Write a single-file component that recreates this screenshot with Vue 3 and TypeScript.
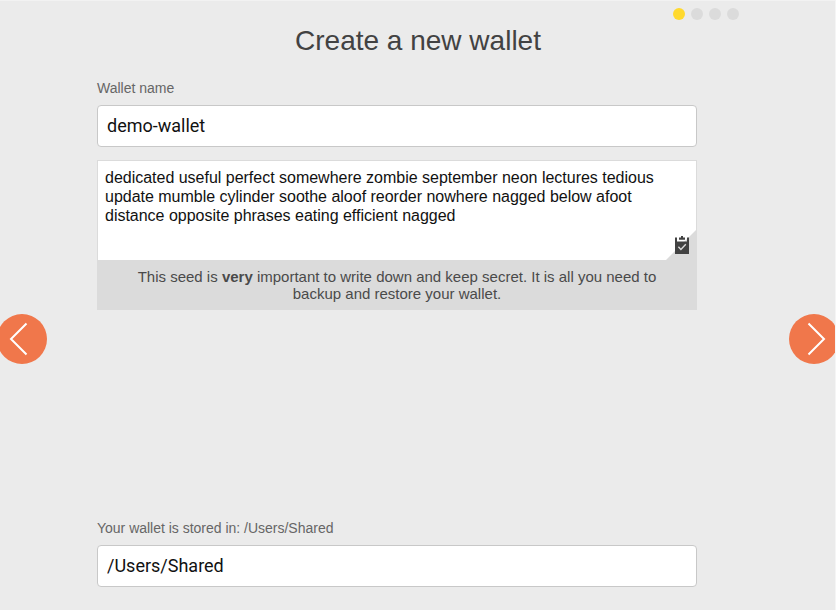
<script setup lang="ts">
import { ref } from 'vue'

const steps = 4
const currentStep = ref(1)
const walletName = ref('demo-wallet')
const walletPath = ref('/Users/Shared')
const seed =
  'dedicated useful perfect somewhere zombie september neon lectures tedious update mumble cylinder soothe aloof reorder nowhere nagged below afoot distance opposite phrases eating efficient nagged'
</script>

<template>
  <div class="wizard">
    <header class="header">
      <div class="dots">
        <span v-for="n in steps" :key="n" class="dot" :class="{ active: n === currentStep }"></span>
      </div>
      <h1 class="title">Create a new wallet</h1>
    </header>
    <div class="body">
      <button class="nav prev" type="button" aria-label="Previous">
        <svg width="50" height="50" viewBox="0 0 50 50">
          <path d="M29.5 9.5 L14 25 L29.5 40.5" />
        </svg>
      </button>
      <main class="form">
        <label class="label" for="name">Wallet name</label>
        <input id="name" v-model="walletName" class="input" type="text" spellcheck="false" />
        <section class="seed">
          <p class="words">{{ seed }}</p>
          <button class="copy" type="button" aria-label="Copy seed">
            <svg width="31" height="31" viewBox="0 0 31 31">
              <path class="corner" d="M31 0 V31 H0 Z" />
              <path class="clip" d="M9 8.5 H11 V12.4 H21 V8.5 H23 V25 H9 Z" />
              <path class="clip" d="M13 8.6 H15 V7 H17 V8.6 H19 V10.8 H13 Z" />
              <path class="check" d="M12.4 17.8 L14.9 20.4 L19.8 15.2" />
            </svg>
          </button>
        </section>
        <p class="note">
          This seed is <b>very</b> important to write down and keep secret. It is all you need to backup and restore your wallet.
        </p>
        <label class="label path-label" for="path">Your wallet is stored in: /Users/Shared</label>
        <input id="path" v-model="walletPath" class="input" type="text" spellcheck="false" />
      </main>
      <button class="nav next" type="button" aria-label="Next">
        <svg width="50" height="50" viewBox="0 0 50 50">
          <path d="M19.5 9.5 L35 25 L19.5 40.5" />
        </svg>
      </button>
    </div>
  </div>
</template>

<style>
body {
  background: #ebebeb;
}
</style>

<style scoped>
.wizard {
  box-sizing: border-box;
  width: 836px;
  height: 610px;
  overflow: hidden;
  display: flex;
  flex-direction: column;
  background: #ebebeb;
  border-top: 1px solid #f2f2f2;
  border-right: 1px solid #f5f5f5;
  font-family: "Liberation Sans", Arial, sans-serif;
}
.header {
  height: 76px;
}
.dots {
  display: flex;
  justify-content: flex-end;
  gap: 6px;
  padding: 7px 96px 0 0;
}
.dot {
  width: 12px;
  height: 12px;
  border-radius: 50%;
  background: #dbdbdb;
}
.dot.active {
  background: #ffd92e;
}
.title {
  margin: 4px 0 0;
  padding-left: 1px;
  font-size: 28px;
  line-height: 34px;
  font-weight: 400;
  text-align: center;
  color: #424242;
}
.body {
  flex: 1;
  display: grid;
  grid-template-columns: 97px 600px 138px;
}
.nav {
  width: 50px;
  height: 50px;
  margin: 237px 0 0;
  padding: 0;
  border: 0;
  border-radius: 50%;
  background: #f0774b;
}
.prev {
  margin-left: -3px;
}
.next {
  margin-left: 92px;
}
.nav svg {
  display: block;
  fill: none;
  stroke: #fff;
  stroke-width: 2;
}
.form {
  display: flex;
  flex-direction: column;
}
.label {
  height: 28px;
  line-height: 22px;
  font-size: 14px;
  letter-spacing: -0.01px;
  color: #666;
}
.input {
  box-sizing: border-box;
  width: 600px;
  height: 42px;
  padding: 0 9px 2px;
  border: 1px solid #c8c8c8;
  border-radius: 4px;
  background: #fff;
  color: #111;
  font: 18px Roboto, sans-serif;
  outline: none;
}
.seed {
  box-sizing: border-box;
  height: 100px;
  margin-top: 13px;
  border: 1px solid #dbdbdb;
  border-bottom: 0;
  background: #fff;
  display: flex;
  flex-direction: column;
  justify-content: space-between;
}
.words {
  margin: 7px 30px 0 7px;
  font-size: 16px;
  line-height: 19px;
  letter-spacing: -0.012px;
  color: #111;
}
.copy {
  align-self: flex-end;
  width: 31px;
  height: 31px;
  margin-right: -1px;
  padding: 0;
  border: 0;
  background: none;
}
.copy svg {
  display: block;
}
.corner {
  fill: #dbdbdb;
}
.clip {
  fill: #424242;
}
.check {
  fill: none;
  stroke: #dbdbdb;
  stroke-width: 1.4;
}
.note {
  box-sizing: border-box;
  height: 50px;
  margin: 0;
  padding: 8px 30px;
  background: #dbdbdb;
  color: #4a4a4a;
  font-size: 15px;
  line-height: 17px;
  text-align: center;
}
.path-label {
  margin-top: 207px;
}
</style>
